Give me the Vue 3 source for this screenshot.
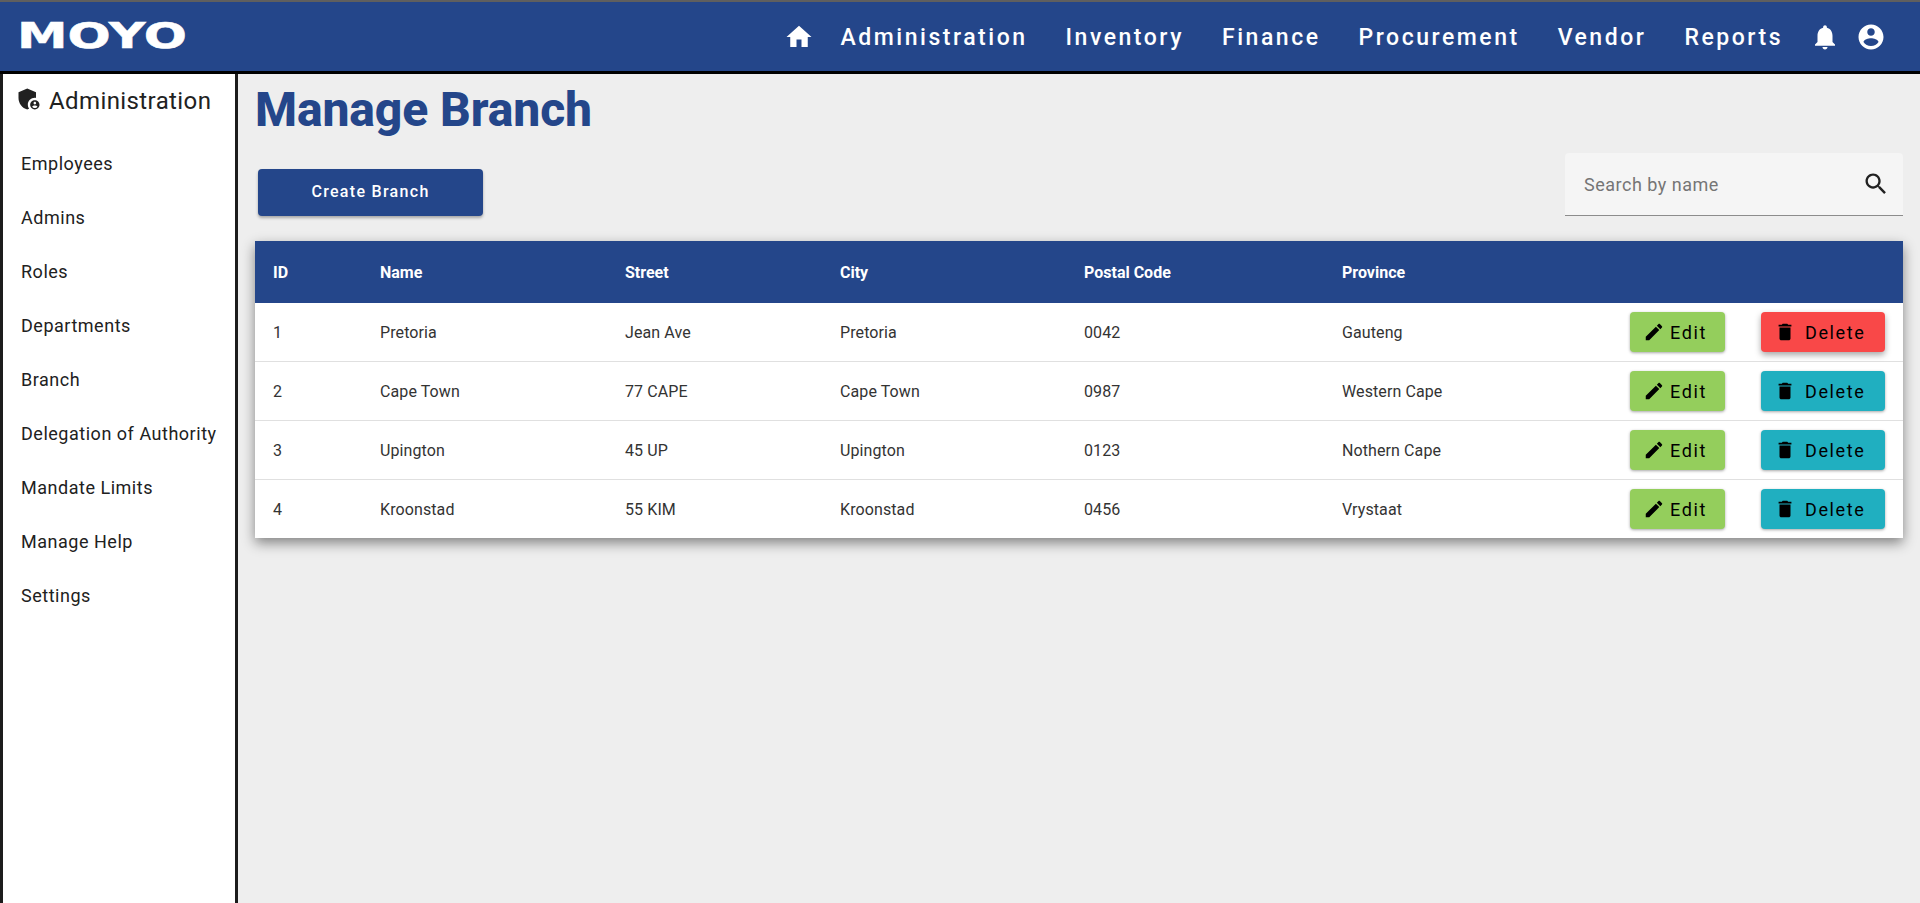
<script setup>
const navItems = ['Administration', 'Inventory', 'Finance', 'Procurement', 'Vendor', 'Reports']
const sideItems = ['Employees', 'Admins', 'Roles', 'Departments', 'Branch', 'Delegation of Authority', 'Mandate Limits', 'Manage Help', 'Settings']
const columns = ['ID', 'Name', 'Street', 'City', 'Postal Code', 'Province']
const branches = [
  { id: 1, name: 'Pretoria', street: 'Jean Ave', city: 'Pretoria', code: '0042', province: 'Gauteng' },
  { id: 2, name: 'Cape Town', street: '77 CAPE', city: 'Cape Town', code: '0987', province: 'Western Cape' },
  { id: 3, name: 'Upington', street: '45 UP', city: 'Upington', code: '0123', province: 'Nothern Cape' },
  { id: 4, name: 'Kroonstad', street: '55 KIM', city: 'Kroonstad', code: '0456', province: 'Vrystaat' }
]
</script>

<template>
  <div class="app">
    <header class="topbar">
      <div class="logo"><span>MOYO</span></div>
      <nav class="nav">
        <svg class="nav-home" viewBox="0 0 24 24"><path d="M10 20v-6h4v6h5v-8h3L12 3 2 12h3v8z" /></svg>
        <a v-for="item in navItems" :key="item" class="nav-link">{{ item }}</a>
        <svg class="nav-bell" viewBox="0 0 24 24"><path d="M12 22c1.1 0 2-.9 2-2h-4c0 1.1.89 2 2 2zm6-6v-5c0-3.07-1.64-5.64-4.5-6.32V4c0-.83-.67-1.5-1.5-1.5s-1.5.67-1.5 1.5v.68C7.63 5.36 6 7.92 6 11v5l-2 2v1h16v-1l-2-2z" /></svg>
        <svg class="nav-user" viewBox="0 0 24 24"><path d="M12 2C6.48 2 2 6.48 2 12s4.48 10 10 10 10-4.48 10-10S17.52 2 12 2zm0 3c1.66 0 3 1.34 3 3s-1.34 3-3 3-3-1.34-3-3 1.34-3 3-3zm0 14.2c-2.5 0-4.71-1.28-6-3.22.03-1.99 4-3.08 6-3.08 1.99 0 5.97 1.09 6 3.08-1.29 1.94-3.5 3.22-6 3.22z" /></svg>
      </nav>
    </header>

    <div class="body">
      <aside class="sidebar">
        <div class="side-title">
          <svg viewBox="0 0 24 24">
            <path d="M17 11c.34 0 .67.04 1 .09V6.27L10.5 3 3 6.27v4.91c0 4.54 3.2 8.79 7.5 9.82.55-.13 1.08-.32 1.6-.55-.69-.98-1.1-2.17-1.1-3.45 0-3.31 2.69-6 6-6z" />
            <path d="M17 13c-2.21 0-4 1.79-4 4s1.79 4 4 4 4-1.79 4-4-1.79-4-4-4zm0 1.38c.62 0 1.12.51 1.12 1.12s-.51 1.12-1.12 1.12-1.12-.51-1.12-1.12.5-1.12 1.12-1.12zm0 5.37c-.93 0-1.74-.46-2.24-1.17.05-.72 1.51-1.08 2.24-1.08s2.19.36 2.24 1.08c-.5.71-1.31 1.17-2.24 1.17z" />
          </svg>
          <span>Administration</span>
        </div>
        <a v-for="item in sideItems" :key="item" class="side-link">{{ item }}</a>
      </aside>

      <main class="main">
        <h1>Manage Branch</h1>
        <div class="toolbar">
          <button class="create">Create Branch</button>
          <div class="search">
            <span>Search by name</span>
            <svg viewBox="0 0 24 24"><path d="M15.5 14h-.79l-.28-.27C15.41 12.59 16 11.11 16 9.5 16 5.91 13.09 3 9.5 3S3 5.91 3 9.5 5.91 16 9.5 16c1.61 0 3.09-.59 4.23-1.57l.27.28v.79l5 4.99L20.49 19l-4.99-5zm-6 0C7.01 14 5 11.99 5 9.5S7.01 5 9.5 5 14 7.01 14 9.5 11.99 14 9.5 14z" /></svg>
          </div>
        </div>

        <div class="table-card">
          <div class="row head">
            <div v-for="col in columns" :key="col">{{ col }}</div>
          </div>
          <div v-for="(b, i) in branches" :key="b.id" class="row">
            <div>{{ b.id }}</div>
            <div>{{ b.name }}</div>
            <div>{{ b.street }}</div>
            <div>{{ b.city }}</div>
            <div>{{ b.code }}</div>
            <div>{{ b.province }}</div>
            <div class="actions">
              <button class="btn edit">
                <svg viewBox="0 0 24 24"><path d="M3 17.25V21h3.75L17.81 9.94l-3.75-3.75L3 17.25zM20.71 7.04c.39-.39.39-1.02 0-1.41l-2.34-2.34c-.39-.39-1.02-.39-1.41 0l-1.83 1.83 3.75 3.75 1.83-1.83z" /></svg>
                Edit
              </button>
              <button class="btn delete" :class="{ hover: i === 0 }">
                <svg viewBox="0 0 24 24"><path d="M6 19c0 1.1.9 2 2 2h8c1.1 0 2-.9 2-2V7H6v12zM19 4h-3.5l-1-1h-5l-1 1H5v2h14V4z" /></svg>
                Delete
              </button>
            </div>
          </div>
        </div>
      </main>
    </div>
  </div>
</template>

<style>
html, body {
  margin: 0;
  background: #eeeeee;
}
</style>

<style scoped>
.app {
  height: 903px;
  overflow: hidden;
  display: flex;
  flex-direction: column;
  font-family: Roboto, "Liberation Sans", sans-serif;
  background: #eeeeee;
}

.topbar {
  height: 69px;
  flex: none;
  display: flex;
  align-items: center;
  justify-content: space-between;
  background: #24468a;
  border-top: 2px solid #5f5f5f;
  border-bottom: 3px solid #000;
}

.logo {
  width: 165px;
  margin-left: 17px;
  margin-top: -1px;
}

.logo span {
  display: inline-block;
  font-family: "DejaVu Sans", sans-serif;
  font-weight: 700;
  font-size: 36px;
  line-height: 36px;
  color: #fff;
  -webkit-text-stroke: 0.5px #fff;
  transform: scaleX(1.41);
  transform-origin: left center;
}

.nav {
  display: flex;
  align-items: center;
  margin-right: 34px;
  color: #fff;
}

.nav svg {
  width: 30px;
  height: 30px;
  fill: #fff;
  flex: none;
}

.nav-home {
  margin-right: 27px;
}

.nav-link {
  padding-top: 2px;
  font-size: 23px;
  font-weight: 500;
  letter-spacing: 2.52px;
  margin-right: 38px;
}

.nav-link:nth-of-type(6) {
  margin-right: 27px;
}

.nav-bell {
  margin-right: 16px;
}

.body {
  flex: 1;
  display: flex;
  min-height: 0;
}

.sidebar {
  width: 232px;
  flex: none;
  background: #fff;
  border-left: 3px solid #1c1c1c;
  border-right: 3px solid #1c1c1c;
  display: flex;
  flex-direction: column;
}

.side-title {
  display: flex;
  align-items: center;
  height: 54px;
  padding-left: 12px;
  font-size: 24px;
  letter-spacing: 0.4px;
  color: #212121;
  gap: 6px;
}

.side-title svg {
  width: 28px;
  height: 28px;
  fill: #212121;
  margin-top: -4px;
}

.side-link {
  height: 54px;
  line-height: 54px;
  padding-left: 18px;
  font-size: 18px;
  color: #212121;
  letter-spacing: 0.52px;
  white-space: nowrap;
}

.side-title + .side-link {
  margin-top: 9px;
}

.main {
  flex: 1;
  min-width: 0;
  padding: 0 17px;
}

h1 {
  margin: 8px 0 0;
  font-size: 48px;
  line-height: 56px;
  font-weight: 800;
  letter-spacing: -0.1px;
  color: #24468a;
}

.toolbar {
  display: flex;
  align-items: flex-end;
  justify-content: space-between;
  margin-top: 15px;
  padding-left: 3px;
}

.create {
  width: 225px;
  height: 47px;
  padding: 0 0 2px;
  border: none;
  border-radius: 4px;
  background: #24468a;
  color: #fff;
  font-family: inherit;
  font-size: 16px;
  font-weight: 500;
  letter-spacing: 1.3px;
  box-shadow: 0 2px 3px rgba(0, 0, 0, 0.3);
}

.search {
  width: 338px;
  height: 63px;
  box-sizing: border-box;
  display: flex;
  align-items: center;
  justify-content: space-between;
  padding: 0 13px 0 19px;
  background: #f5f5f5;
  border-bottom: 1px solid #8c8c8c;
  border-radius: 4px 4px 0 0;
  font-size: 18px;
  letter-spacing: 0.5px;
  color: #757575;
}

.search svg {
  width: 28px;
  height: 28px;
  fill: #212121;
}

.table-card {
  margin-top: 25px;
  background: #fff;
  box-shadow: 0 5px 12px rgba(0, 0, 0, 0.45);
}

.row {
  display: grid;
  grid-template-columns: 107px 245px 215px 244px 258px 1fr auto;
  align-items: center;
  height: 59px;
  padding-left: 18px;
  font-size: 16px;
  letter-spacing: 0.1px;
  color: #333;
  border-bottom: 1px solid #e0e0e0;
  box-sizing: border-box;
}

.row:last-child {
  height: 58px;
  border-bottom: none;
}

.row.head {
  height: 62px;
  background: #24468a;
  color: #fff;
  font-weight: 700;
  letter-spacing: 0;
  border-bottom: none;
}

.actions {
  display: flex;
  gap: 36px;
  padding-right: 18px;
}

.btn {
  display: flex;
  align-items: center;
  height: 40px;
  padding: 0 0 0 13px;
  border: none;
  border-radius: 4px;
  color: #000;
  font-family: inherit;
  font-size: 18px;
  font-weight: 400;
  letter-spacing: 1.6px;
  box-shadow: 0 1px 3px rgba(0, 0, 0, 0.35);
}

.btn svg {
  width: 22px;
  height: 22px;
  fill: #000;
}

.edit {
  width: 95px;
  background: #94ce5c;
  gap: 5px;
}

.delete {
  width: 124px;
  background: #20afc0;
  gap: 9px;
}

.delete.hover {
  background: #f94848;
  box-shadow: 0 3px 6px rgba(0, 0, 0, 0.35);
}
</style>
